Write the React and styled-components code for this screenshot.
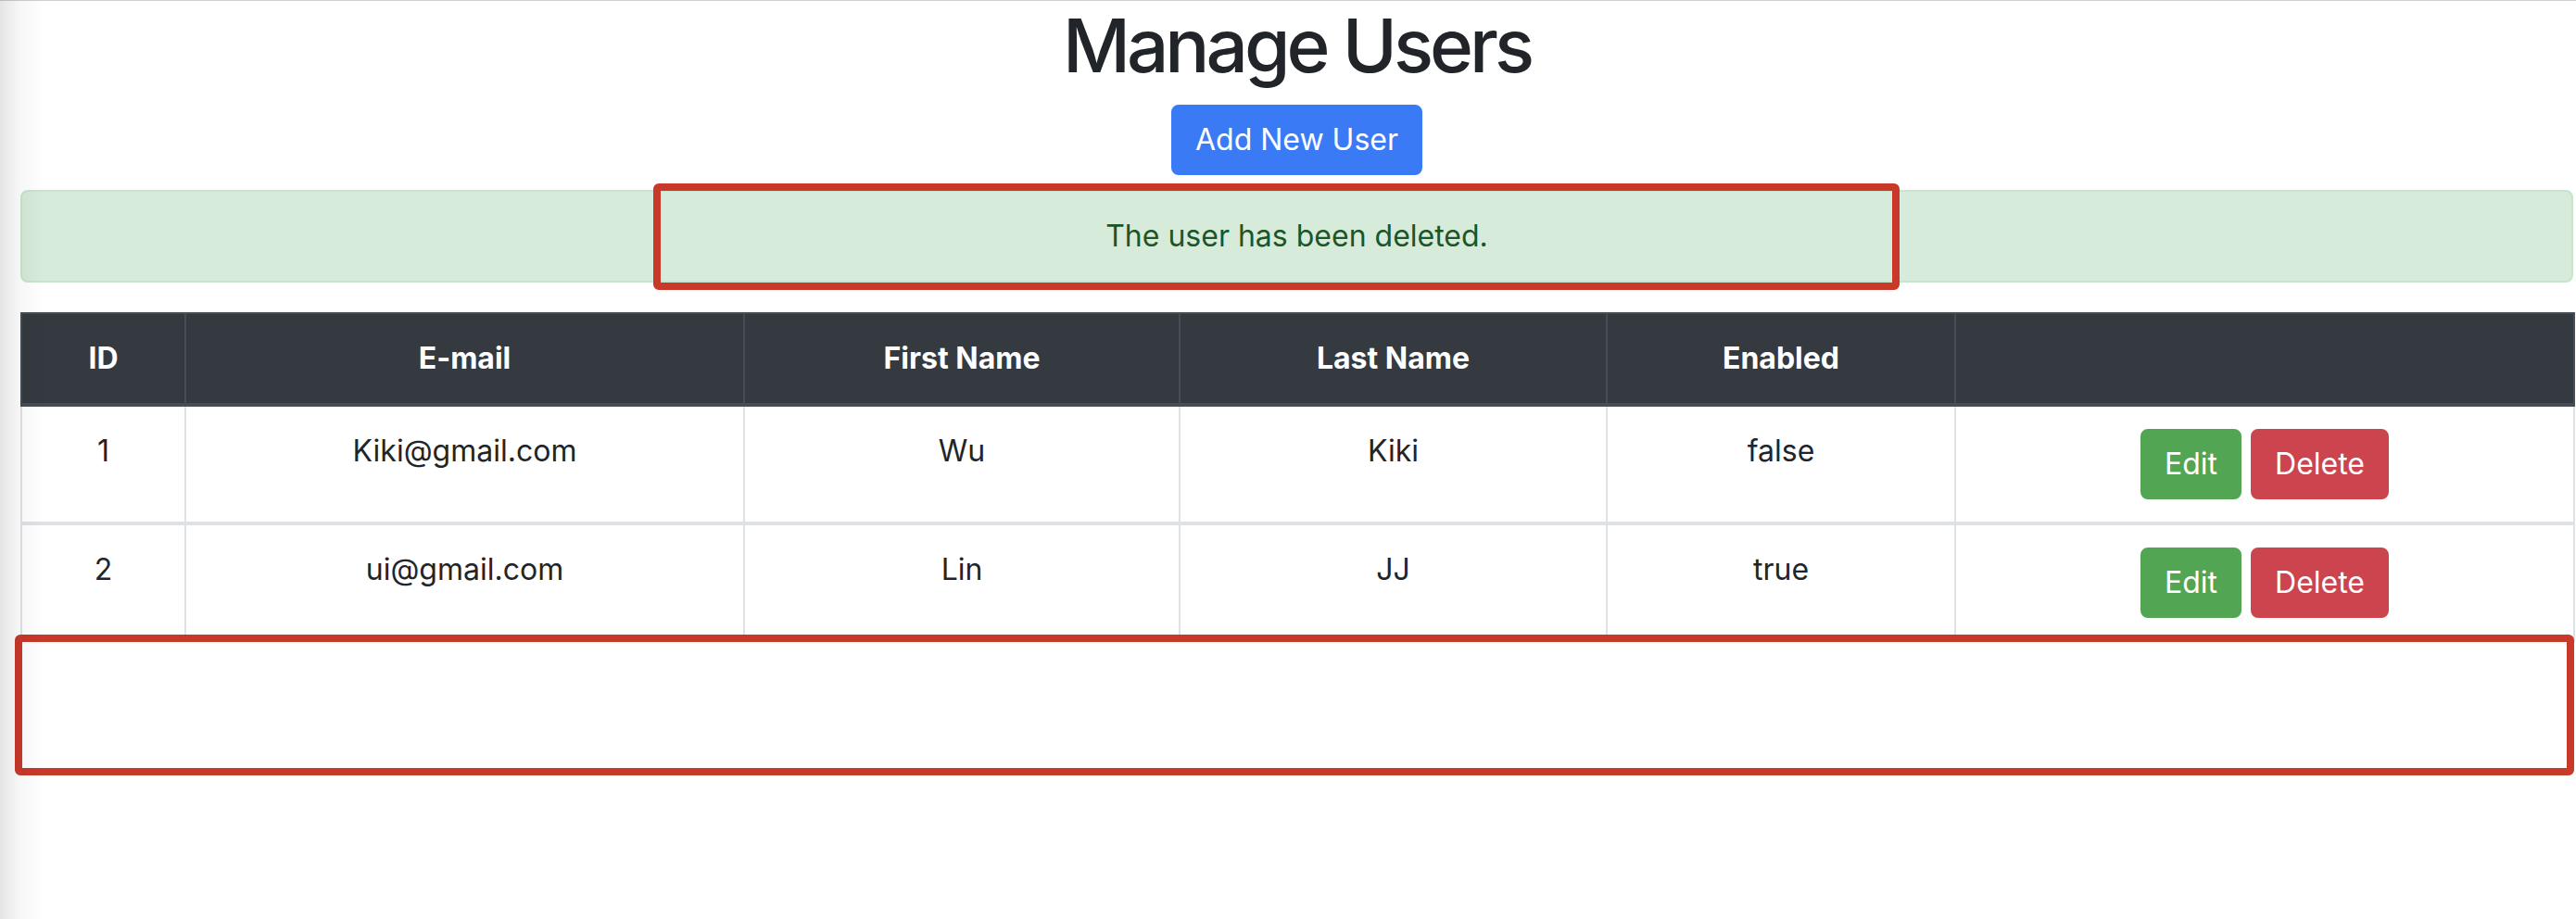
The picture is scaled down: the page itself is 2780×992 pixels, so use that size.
import React from "react";
import styled, { createGlobalStyle } from "styled-components";

const GlobalStyle = createGlobalStyle`
  html, body {
    margin: 0;
    padding: 0;
    background: #ffffff;
  }
  body {
    font-family: Inter, "Noto Sans", "Liberation Sans", sans-serif;
    color: #212529;
    border-top: 1px solid #cfcfcf;
  }
  #root {
    min-height: 990px;
  }
  * { box-sizing: border-box; }
`;

const EdgeShade = styled.div`
  position: fixed;
  left: 0;
  top: 0;
  bottom: 0;
  width: 48px;
  pointer-events: none;
  background: linear-gradient(to right, rgba(0, 0, 0, 0.1), rgba(0, 0, 0, 0.03) 45%, rgba(0, 0, 0, 0));
  z-index: 5;
`;

const Container = styled.main`
  width: 2777px;
  min-height: 990px;
  padding-left: 22px;
  display: flex;
  flex-direction: column;
  align-items: center;
`;

const Title = styled.h1`
  margin: 0 0 16px;
  font-size: 80px;
  line-height: 96px;
  font-weight: 500;
  letter-spacing: -4px;
  color: #212529;
`;

const PrimaryButton = styled.button`
  font-family: inherit;
  font-size: 32px;
  line-height: 48px;
  padding: 12px 24px;
  border: 2px solid #3a7bf5;
  background: #3a7bf5;
  color: #ffffff;
  border-radius: 8px;
  margin-bottom: 16px;
  white-space: nowrap;
`;

const AlertWrap = styled.div`
  position: relative;
  width: 100%;
  margin-bottom: 32px;
`;

const Alert = styled.div`
  width: 100%;
  padding: 24px 40px;
  font-size: 32px;
  line-height: 48px;
  text-align: center;
  background: #d7ebda;
  border: 2px solid #c7e4cc;
  color: #1d5527;
  border-radius: 8px;
`;

const Annotation = styled.div`
  position: absolute;
  border: 8px solid #c8392a;
  border-radius: 6px;
  pointer-events: none;
  z-index: 3;
`;

const TableWrap = styled.div`
  position: relative;
  width: 100%;
  padding-bottom: 160px;
`;

const Table = styled.table`
  width: 100%;
  border-collapse: collapse;
  table-layout: fixed;
  font-size: 32px;
  line-height: 48px;
`;

const HeadCell = styled.th`
  background: #343a40;
  color: #ffffff;
  font-weight: 700;
  padding: 24px;
  border: 2px solid #454d55;
  border-bottom-width: 4px;
  text-align: center;
  vertical-align: bottom;
`;

const Body = styled.tbody`
  & + & {
    border-top: 4px solid #dee2e6;
  }
`;

const Cell = styled.td`
  padding: 24px;
  border: 2px solid #dee2e6;
  text-align: center;
  vertical-align: top;
  color: #212529;
`;

const Actions = styled.div`
  display: flex;
  justify-content: center;
  gap: 10px;
`;

const ActionButton = styled.button`
  font-family: inherit;
  font-size: 32px;
  line-height: 48px;
  padding: 12px 24px;
  border-radius: 8px;
  color: #ffffff;
  white-space: nowrap;
  border: 2px solid ${(p) => (p.$variant === "danger" ? "#cc444e" : "#52a552")};
  background: ${(p) => (p.$variant === "danger" ? "#cc444e" : "#52a552")};
`;

const columns = [
  { label: "ID", width: 177 },
  { label: "E-mail", width: 603 },
  { label: "First Name", width: 470 },
  { label: "Last Name", width: 461 },
  { label: "Enabled", width: 376 },
  { label: "", width: 668 },
];

const users = [
  { id: 1, email: "Kiki@gmail.com", first: "Wu", last: "Kiki", enabled: "false" },
  { id: 2, email: "ui@gmail.com", first: "Lin", last: "JJ", enabled: "true" },
];

export default function App() {
  return (
    <>
      <GlobalStyle />
      <EdgeShade />
      <Container>
        <Title>Manage Users</Title>
        <PrimaryButton>Add New User</PrimaryButton>
        <AlertWrap>
          <Alert>The user has been deleted.</Alert>
          <Annotation style={{ left: 683, top: -7, width: 1345, height: 115 }} />
        </AlertWrap>
        <TableWrap>
          <Table>
            <colgroup>
              {columns.map((c, i) => (
                <col key={i} style={{ width: c.width }} />
              ))}
            </colgroup>
            <thead>
              <tr>
                {columns.map((c, i) => (
                  <HeadCell key={i}>{c.label}</HeadCell>
                ))}
              </tr>
            </thead>
            {users.map((u) => (
              <Body key={u.id}>
                <tr>
                  <Cell>{u.id}</Cell>
                  <Cell>{u.email}</Cell>
                  <Cell>{u.first}</Cell>
                  <Cell>{u.last}</Cell>
                  <Cell>{u.enabled}</Cell>
                  <Cell>
                    <Actions>
                      <ActionButton>Edit</ActionButton>
                      <ActionButton $variant="danger">Delete</ActionButton>
                    </Actions>
                  </Cell>
                </tr>
              </Body>
            ))}
          </Table>
          <Annotation style={{ left: -6, top: 348, width: 2762, height: 152 }} />
        </TableWrap>
      </Container>
    </>
  );
}
